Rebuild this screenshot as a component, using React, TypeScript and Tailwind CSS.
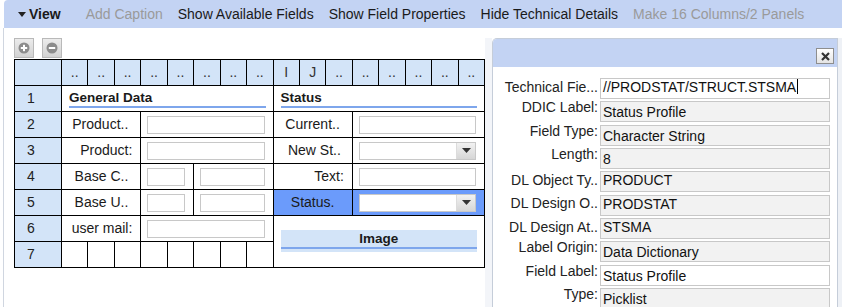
import React from "react";

const headCols = ["..", "..", "..", "..", "..", "..", "..", "..", "I", "J", "..", "..", "..", "..", "..", ".."];

const props = [
  { label: "Technical Fie...", value: "//PRODSTAT/STRUCT.STSMA", kind: "a", white: true, cursor: true },
  { label: "DDIC Label:", value: "Status Profile", kind: "b" },
  { label: "Field Type:", value: "Character String", kind: "b" },
  { label: "Length:", value: "8", kind: "b" },
  { label: "DL Object Ty..", value: "PRODUCT", kind: "a" },
  { label: "DL Design O..", value: "PRODSTAT", kind: "a" },
  { label: "DL Design At..", value: "STSMA", kind: "a" },
  { label: "Label Origin:", value: "Data Dictionary", kind: "b" },
  { label: "Field Label:", value: "Status Profile", kind: "b", white: true },
  { label: "Type:", value: "Picklist", kind: "b" },
];

const RowNum = ({ n }: { n?: number }) => (
  <div className="bg-[#d3e4f8] pl-[12px] text-[14px] leading-[25px] text-[#222]">{n}</div>
);

const Box = () => <div className="ml-[6px] mr-[8px] h-[18px] border border-[#c8c8c8] bg-white" />;

const Select = () => (
  <div className="ml-[6px] mr-[8px] flex h-[18px] border border-[#c8c8c8] bg-white">
    <div className="flex-1" />
    <div className="flex w-[19px] items-center justify-center border-l border-[#dcdcdc] bg-gradient-to-b from-[#f2f2f2] to-[#d6d6d6]">
      <svg width="9" height="5" viewBox="0 0 9 5">
        <path d="M0 0h9L4.5 5z" fill="#333" />
      </svg>
    </div>
  </div>
);

const PlusMinus = ({ plus }: { plus?: boolean }) => (
  <div className="flex h-[20px] w-[20px] items-center justify-center border border-[#b9b9b9] bg-gradient-to-b from-[#ececec] to-[#d2d2d2]">
    <svg width="12" height="12" viewBox="0 0 12 12">
      <circle cx="6" cy="6" r="5.5" fill="#8c8c8c" />
      <rect x="2.8" y="5" width="6.4" height="2" fill="#fff" />
      {plus && <rect x="5" y="2.8" width="2" height="6.4" fill="#fff" />}
    </svg>
  </div>
);

export default function App() {
  return (
    <div className="h-[307px] w-[842px] overflow-hidden bg-white font-['Liberation_Sans',Arial,sans-serif] text-[#1a1a1a]">
      <div className="ml-[4px] flex h-[28px] items-center rounded-tl-[4px] bg-[#c3d3f3] pl-[14px] text-[14px]">
        <div className="mr-[25px] flex items-center gap-[3px] font-bold">
          <svg width="8" height="5" viewBox="0 0 8 5">
            <path d="M0 0h8L4 5z" fill="#222" />
          </svg>
          View
        </div>
        <div className="flex items-center gap-[15px]">
          <span className="text-[#9a9a9a]">Add Caption</span>
          <span>Show Available Fields</span>
          <span>Show Field Properties</span>
          <span>Hide Technical Details</span>
          <span className="text-[#9a9a9a]">Make 16 Columns/2 Panels</span>
        </div>
      </div>

      <div className="ml-[3px] flex h-[279px] border-l border-[#d0d6e0]">
        <div className="w-[481px] pl-[10px] pt-[10px]">
          <div className="flex gap-[8px]">
            <PlusMinus plus />
            <PlusMinus />
          </div>
          <div className="mt-[1px] grid w-[471px] grid-cols-[46px_repeat(16,minmax(0,1fr))] grid-rows-[repeat(8,25px)] gap-px border border-black bg-black text-[14px]">
            <RowNum />
            {headCols.map((c, i) => (
              <div key={i} className="bg-[#d3e4f8] text-center leading-[25px] text-[#333]">
                {c}
              </div>
            ))}

            <RowNum n={1} />
            <div className="col-span-8 bg-white px-[7px] pt-[4px]">
              <div className="border-b-2 border-[#7ea6ec] pb-[1px] text-[13.5px] font-bold leading-[15px]">General Data</div>
            </div>
            <div className="col-span-8 bg-white px-[7px] pt-[4px]">
              <div className="border-b-2 border-[#7ea6ec] pb-[1px] text-[13.5px] font-bold leading-[15px]">Status</div>
            </div>

            <RowNum n={2} />
            <div className="col-span-3 bg-white pr-[12px] text-right leading-[25px]">Product..</div>
            <div className="col-span-5 flex flex-col justify-center bg-white"><Box /></div>
            <div className="col-span-3 bg-white pr-[12px] text-right leading-[25px]">Current..</div>
            <div className="col-span-5 flex flex-col justify-center bg-white"><Box /></div>

            <RowNum n={3} />
            <div className="col-span-3 bg-white pr-[8px] text-right leading-[25px]">Product:</div>
            <div className="col-span-5 flex flex-col justify-center bg-white"><Box /></div>
            <div className="col-span-3 bg-white pr-[11px] text-right leading-[25px]">New St..</div>
            <div className="col-span-5 flex flex-col justify-center bg-white"><Select /></div>

            <RowNum n={4} />
            <div className="col-span-3 bg-white pr-[12px] text-right leading-[25px]">Base C..</div>
            <div className="col-span-2 flex flex-col justify-center bg-white"><Box /></div>
            <div className="col-span-3 flex flex-col justify-center bg-white"><Box /></div>
            <div className="col-span-3 bg-white pr-[8px] text-right leading-[25px]">Text:</div>
            <div className="col-span-5 flex flex-col justify-center bg-white"><Box /></div>

            <RowNum n={5} />
            <div className="col-span-3 bg-white pr-[12px] text-right leading-[25px]">Base U..</div>
            <div className="col-span-2 flex flex-col justify-center bg-white"><Box /></div>
            <div className="col-span-3 flex flex-col justify-center bg-white"><Box /></div>
            <div className="col-span-3 bg-[#6b9bfb] text-center leading-[25px]">Status.</div>
            <div className="col-span-5 flex flex-col justify-center bg-[#6b9bfb]"><Select /></div>

            <RowNum n={6} />
            <div className="col-span-3 bg-white pr-[8px] text-right leading-[25px]">user mail:</div>
            <div className="col-span-5 flex flex-col justify-center bg-white"><Box /></div>
            <div className="col-span-8 row-span-2 bg-white px-[7px] pt-[14px]">
              <div className="h-[22px] bg-[#d3e4f8] pt-[2px]">
                <div className="border-b-2 border-[#7ea6ec] pb-[1px] text-center text-[13.5px] font-bold leading-[14px]">Image</div>
              </div>
            </div>

            <RowNum n={7} />
            {Array.from({ length: 8 }).map((_, i) => (
              <div key={i} className="bg-white" />
            ))}
          </div>
        </div>

        <div className="mt-[10px] w-[7px] bg-[#f3f5f9]" />

        <div className="mt-[10px] w-[346px] overflow-hidden rounded-tl-[5px] border border-b-0 border-[#c5cdd9]">
          <div className="flex h-[28px] justify-end bg-[#c3d3f3] pr-[3px] pt-[9px]">
            <div className="flex h-[16px] w-[18px] items-center justify-center border border-[#8e8e8e] bg-gradient-to-b from-white to-[#e4e4e4]">
              <svg width="9" height="9" viewBox="0 0 9 9">
                <path d="M1 1l7 7M8 1l-7 7" stroke="#333" strokeWidth="2.2" />
              </svg>
            </div>
          </div>
          <div className="flex flex-col gap-[2.35px] bg-white pt-[11px]">
            {props.map((p) => (
              <div key={p.label} className="flex h-[21px] items-start">
                <div
                  className={`w-[107px] shrink-0 whitespace-nowrap pr-[2px] text-right text-[14px] leading-[15px] text-[#222] ${
                    p.kind === "a" ? "mt-[1.5px]" : "-mt-[1px]"
                  }`}
                >
                  {p.label}
                </div>
                <div
                  className={`h-[21px] w-[230px] border border-[#c8c8c8] pl-[2px] text-[14px] text-[#111] ${
                    p.white ? "bg-white" : "bg-[#f2f2f2]"
                  } ${p.kind === "a" ? "leading-[17px]" : "pt-[1px] leading-[19px]"}`}
                >
                  {p.value}
                  {p.cursor && <span className="ml-[1px] inline-block h-[15px] w-px bg-black align-[-2px]" />}
                </div>
              </div>
            ))}
          </div>
        </div>

        <div className="mt-[10px] flex-1 bg-[#eef1f6]" />
      </div>
    </div>
  );
}
